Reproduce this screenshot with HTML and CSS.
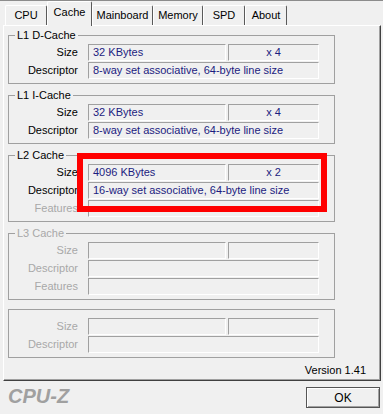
FILE: index.html
```html
<!DOCTYPE html>
<html lang="en">

<head>
  <meta charset="UTF-8" />
  <meta name="viewport" content="width=device-width, initial-scale=1.0" />
  <title>CPU-Z</title>
  <link rel="stylesheet" href="styles.css">
</head>

<body>
  <div class="window">
    <div class="tabs">
      <div class="tab t-cpu">CPU</div>
      <div class="tab t-cache active">Cache</div>
      <div class="tab t-main">Mainboard</div>
      <div class="tab t-mem">Memory</div>
      <div class="tab t-spd">SPD</div>
      <div class="tab t-about">About</div>
    </div>

    <div class="panel">
      <div class="group">
        <span class="legend">L1 D-Cache</span>
        <div class="row">
          <span class="label">Size</span>
          <span class="field size">32 KBytes</span>
          <span class="field count">x 4</span>
        </div>
        <div class="row">
          <span class="label">Descriptor</span>
          <span class="field wide">8-way set associative, 64-byte line size</span>
        </div>
      </div>

      <div class="group">
        <span class="legend">L1 I-Cache</span>
        <div class="row">
          <span class="label">Size</span>
          <span class="field size">32 KBytes</span>
          <span class="field count">x 4</span>
        </div>
        <div class="row">
          <span class="label">Descriptor</span>
          <span class="field wide">8-way set associative, 64-byte line size</span>
        </div>
      </div>

      <div class="group">
        <span class="legend">L2 Cache</span>
        <div class="row">
          <span class="label">Size</span>
          <span class="field size">4096 KBytes</span>
          <span class="field count">x 2</span>
        </div>
        <div class="row">
          <span class="label">Descriptor</span>
          <span class="field wide">16-way set associative, 64-byte line size</span>
        </div>
        <div class="row">
          <span class="label off">Features</span>
          <span class="field wide"></span>
        </div>
        <div class="mark"></div>
      </div>

      <div class="group disabled">
        <span class="legend">L3 Cache</span>
        <div class="row">
          <span class="label">Size</span>
          <span class="field size"></span>
          <span class="field count"></span>
        </div>
        <div class="row">
          <span class="label">Descriptor</span>
          <span class="field wide"></span>
        </div>
        <div class="row">
          <span class="label">Features</span>
          <span class="field wide"></span>
        </div>
      </div>

      <div class="group disabled plain">
        <div class="row">
          <span class="label">Size</span>
          <span class="field size"></span>
          <span class="field count"></span>
        </div>
        <div class="row">
          <span class="label">Descriptor</span>
          <span class="field wide"></span>
        </div>
      </div>

      <div class="version">Version 1.41</div>
    </div>

    <div class="footer">
      <span class="logo">CPU-Z</span>
      <button class="ok">OK</button>
    </div>
  </div>
</body>

</html>
```

FILE: styles.css
```css
:root {
  --face: #f0f0f0;
  --shadow: #a0a0a0;
  --dark: #5a5a5a;
  --value: #1c1c80;
  --disabled: #a8a8a8;
}

body {
  margin: 0;
  background-color: var(--face);
  font-family: 'Liberation Sans', Arial, sans-serif;
  font-size: 11px;
  color: #000;
}

.window {
  width: 383px;
  height: 414px;
  box-sizing: border-box;
  border-top: 1px solid #8c8c8c;
  overflow: hidden;
}

/* tab strip */
.tabs {
  display: flex;
  align-items: flex-end;
  height: 24px;
  padding-left: 5px;
  position: relative;
  z-index: 1;
}

.tab {
  box-sizing: border-box;
  height: 20px;
  line-height: 18px;
  text-align: center;
  border: 1px solid;
  border-color: #fff var(--dark) transparent #fff;
  border-bottom: none;
  border-radius: 2px 2px 0 0;
}

.tab.active {
  height: 25px;
  margin-bottom: -1px;
  line-height: 20px;
  background-color: var(--face);
}

.t-cpu { width: 42px; }
.t-cache { width: 45px; }
.t-main { width: 61px; }
.t-mem { width: 50px; }
.t-spd { width: 42px; }
.t-about { width: 42px; }

/* tab page */
.panel {
  box-sizing: border-box;
  height: 356px;
  margin: 0 2px 0 3px;
  padding: 9px 0 0 4px;
  border: 1px solid;
  border-color: #fff #404040 #404040 #fff;
  box-shadow: inset -1px -1px var(--shadow);
}

.group {
  position: relative;
  box-sizing: border-box;
  width: 327px;
  margin-top: 11px;
  padding: 8px 0 4px 0;
  border: 1px solid var(--shadow);
}

.group:first-child {
  margin-top: 0;
}

.group.plain {
  margin-top: 9px;
}

.legend {
  position: absolute;
  top: -7px;
  left: 6px;
  padding: 0 2px;
  line-height: 13px;
  background-color: var(--face);
}

.row {
  display: flex;
}

.row + .row {
  margin-top: 1px;
}

.label {
  width: 69px;
  margin-right: 10px;
  text-align: right;
  line-height: 17px;
}

.label.off,
.disabled .label,
.disabled .legend {
  color: var(--disabled);
}

.field {
  box-sizing: border-box;
  height: 17px;
  padding-left: 4px;
  line-height: 15px;
  border: 1px solid;
  border-color: var(--shadow) #fff #fff var(--shadow);
  color: var(--value);
  white-space: nowrap;
  overflow: hidden;
}

.size {
  width: 138px;
  margin-right: 2px;
}

.count {
  width: 91px;
  padding-left: 0;
  text-align: center;
}

.wide {
  width: 231px;
}

.mark {
  position: absolute;
  left: 68px;
  top: -3px;
  width: 250px;
  height: 59px;
  box-sizing: border-box;
  border: 6px solid #f00;
}

.version {
  margin-top: 6px;
  padding-right: 14px;
  text-align: right;
  line-height: 13px;
}

/* bottom bar */
.footer {
  display: flex;
  justify-content: space-between;
  align-items: flex-start;
  padding: 0 3px 0 8px;
}

.logo {
  margin-top: 5px;
  font-size: 20px;
  line-height: 20px;
  font-weight: bold;
  font-style: italic;
  color: var(--shadow);
}

.ok {
  width: 74px;
  height: 21px;
  margin-top: 6px;
  padding: 0;
  font-family: 'Liberation Sans', Arial, sans-serif;
  font-size: 12px;
  color: #000;
  background-color: var(--face);
  border: 1px solid #555;
  box-shadow: inset 1px 1px #fff, inset -1px -1px var(--shadow);
}
```
